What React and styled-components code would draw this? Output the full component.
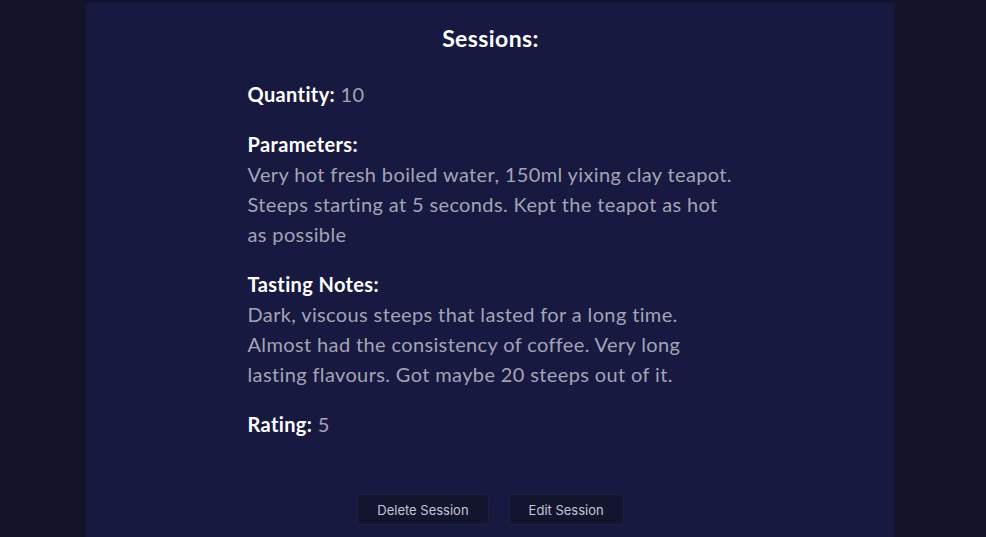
import React from "react";
import styled, { createGlobalStyle } from "styled-components";

const GlobalStyle = createGlobalStyle`
  html, body {
    margin: 0;
    padding: 0;
    background-color: #13142a;
    overflow: hidden;
  }
  body {
    font-family: "Lato", "Noto Sans", sans-serif;
  }
`;

const Page = styled.div`
  display: flex;
  justify-content: center;
  height: 537px;
  padding-right: 5px;
  background-color: #13142a;
  overflow: hidden;
`;

const Panel = styled.main`
  width: 809px;
  flex-shrink: 0;
  background-color: #171940;
  box-shadow: inset 0 3px 3px -1px rgba(10, 10, 25, 0.5);
  padding-top: 23px;
  box-sizing: border-box;
  display: flex;
  flex-direction: column;
  align-items: center;
`;

const Title = styled.h2`
  margin: 0;
  font-size: 23px;
  line-height: 30px;
  letter-spacing: 0.4px;
  font-weight: 700;
  color: #ffffff;
`;

const Details = styled.div`
  width: 486px;
  margin-top: 26px;
  display: flex;
  flex-direction: column;
  gap: 20px;
`;

const Field = styled.div`
  font-size: 20px;
  line-height: 30px;
  letter-spacing: 0.37px;
  color: #a3a4b6;
`;

const Label = styled.span`
  display: ${(props) => (props.block ? "block" : "inline")};
  font-weight: 700;
  color: #ffffff;
`;

const Actions = styled.div`
  display: flex;
  gap: 20px;
  margin-top: 55px;
`;

const Button = styled.button`
  height: 31px;
  padding: 0 19px;
  border-radius: 4px;
  border: 1px solid #1d1f3f;
  background-color: #13152f;
  color: #c4c5d4;
  font-family: "Inter", "Liberation Sans", sans-serif;
  font-size: 13px;
  cursor: pointer;
`;

const session = {
  quantity: 10,
  parameters:
    "Very hot fresh boiled water, 150ml yixing clay teapot. Steeps starting at 5 seconds. Kept the teapot as hot as possible",
  notes:
    "Dark, viscous steeps that lasted for a long time. Almost had the consistency of coffee. Very long lasting flavours. Got maybe 20 steeps out of it.",
  rating: 5,
};

export default function App() {
  return (
    <>
      <GlobalStyle />
      <Page>
        <Panel>
          <Title>Sessions:</Title>
          <Details>
            <Field>
              <Label>Quantity:</Label> {session.quantity}
            </Field>
            <Field>
              <Label block>Parameters:</Label>
              {session.parameters}
            </Field>
            <Field>
              <Label block>Tasting Notes:</Label>
              {session.notes}
            </Field>
            <Field>
              <Label>Rating:</Label> {session.rating}
            </Field>
          </Details>
          <Actions>
            <Button>Delete Session</Button>
            <Button>Edit Session</Button>
          </Actions>
        </Panel>
      </Page>
    </>
  );
}
